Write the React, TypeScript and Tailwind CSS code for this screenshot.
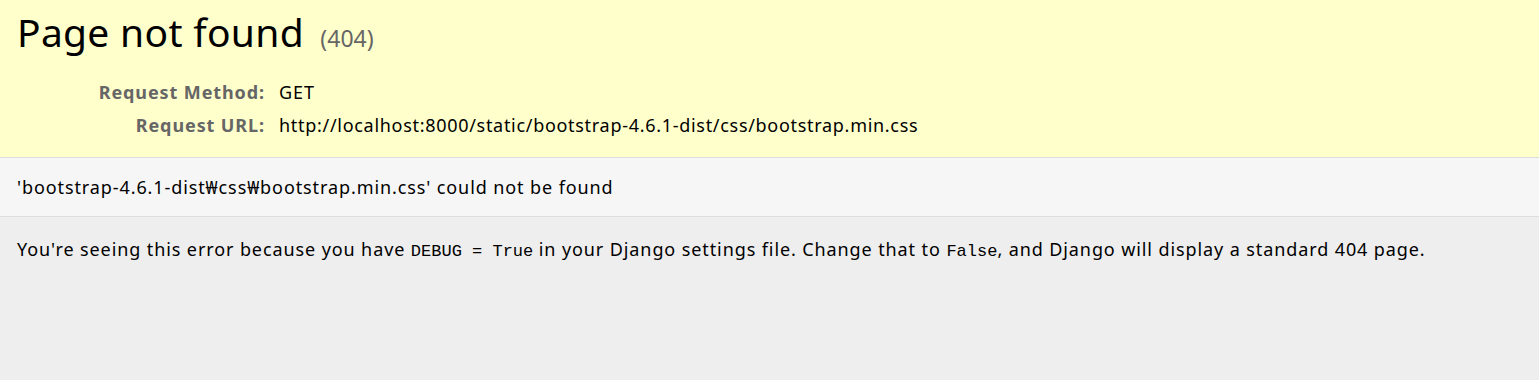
import React from 'react'

const App = () => {
  return (
    <div className="min-h-[380px] w-full bg-[#eee] text-black font-['Noto_Sans',sans-serif] text-[18px] tracking-[0.9px]">
      <div className="bg-[#ffc] border-b border-[#ddd] px-[17px] pt-[6px] pb-[13px]">
        <h1 className="text-[39px] leading-[52px] font-normal tracking-[0.3px] mb-[14px]">
          Page not found <span className="ml-[6px] text-[23px] text-[#666] tracking-normal">(404)</span>
        </h1>
        <table className="border-collapse">
          <tbody>
            <tr>
              <th className="w-[262px] text-right text-[#666] font-bold align-top pr-[14px] h-[33px] leading-[28px]">
                Request Method:
              </th>
              <td className="align-top leading-[28px]">GET</td>
            </tr>
            <tr>
              <th className="w-[262px] text-right text-[#666] font-bold align-top pr-[14px] h-[33px] leading-[28px]">
                Request URL:
              </th>
              <td className="align-top leading-[28px] tracking-[0.7px]">
                http://localhost:8000/static/bootstrap-4.6.1-dist/css/bootstrap.min.css
              </td>
            </tr>
          </tbody>
        </table>
      </div>
      <div className="bg-[#f6f6f6] border-b border-[#ddd] px-[17px] h-[59px] flex items-center">
        <p>'bootstrap-4.6.1-dist₩css₩bootstrap.min.css' could not be found</p>
      </div>
      <div className="px-[17px] pt-[19px]">
        <p>
          You're seeing this error because you have{' '}
          <code className="font-['Liberation_Mono',monospace] text-[17px] tracking-normal">DEBUG = True</code> in your
          Django settings file. Change that to{' '}
          <code className="font-['Liberation_Mono',monospace] text-[17px] tracking-normal">False</code>, and Django
          will display a standard 404 page.
        </p>
      </div>
    </div>
  )
}

export default App
